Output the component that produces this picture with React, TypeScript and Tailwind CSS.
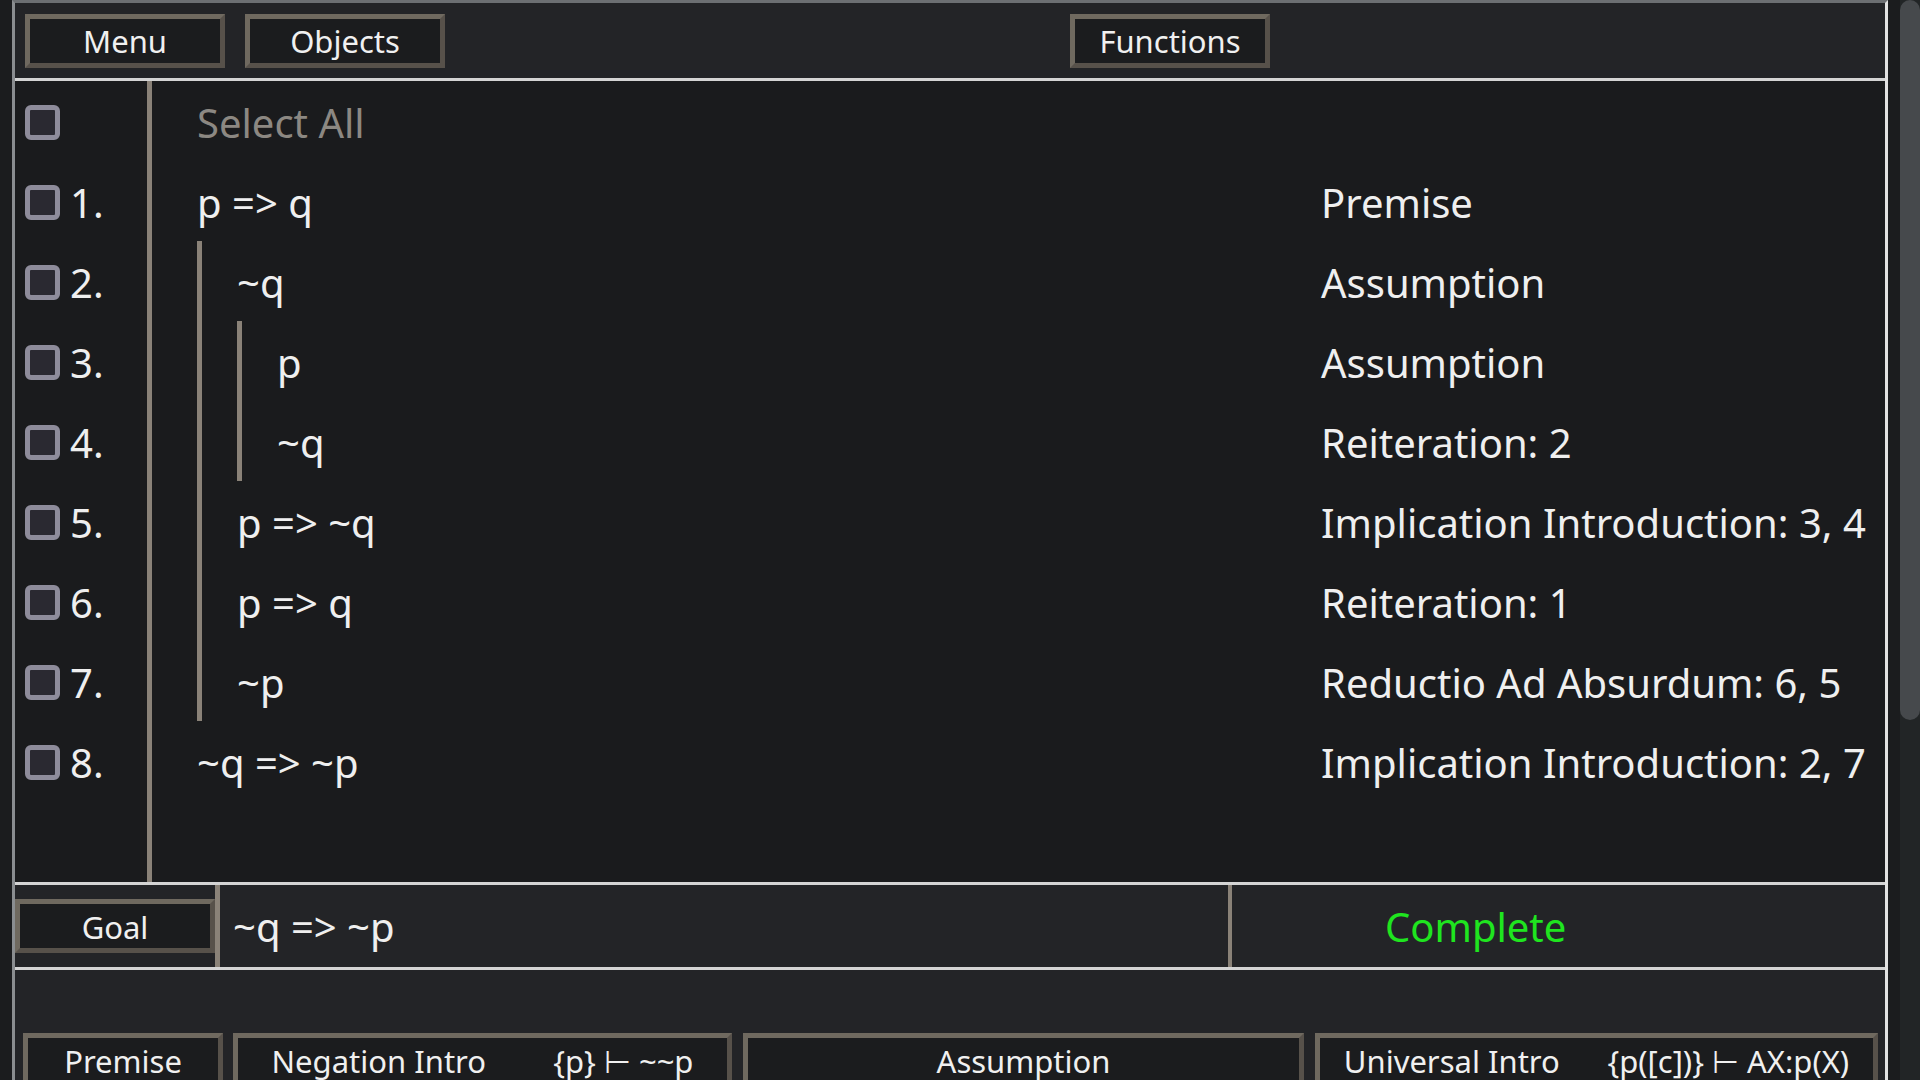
import { useState } from 'react'

type Line = { n: number; formula: string; depth: number; rule: string }

const lines: Line[] = [
  { n: 1, formula: 'p => q', depth: 0, rule: 'Premise' },
  { n: 2, formula: '~q', depth: 1, rule: 'Assumption' },
  { n: 3, formula: 'p', depth: 2, rule: 'Assumption' },
  { n: 4, formula: '~q', depth: 2, rule: 'Reiteration: 2' },
  { n: 5, formula: 'p => ~q', depth: 1, rule: 'Implication Introduction: 3, 4' },
  { n: 6, formula: 'p => q', depth: 1, rule: 'Reiteration: 1' },
  { n: 7, formula: '~p', depth: 1, rule: 'Reductio Ad Absurdum: 6, 5' },
  { n: 8, formula: '~q => ~p', depth: 0, rule: 'Implication Introduction: 2, 7' },
]

// rows of rule buttons under the goal bar: [name, schema]
const ruleRows: [string, string][][] = [
  [['Premise', ''], ['Negation Intro', '{p} ⊢ ~~p'], ['Assumption', ''], ['Universal Intro', '{p([c])} ⊢ AX:p(X)']],
  [['Reiteration', ''], ['Negation Elim', '{~~p} ⊢ p'], ['Implication Intro', ''], ['Universal Elim', '{AX:p(X)} ⊢ p([c])']],
  [['Delete', ''], ['And Intro', '{p, q} ⊢ p && q'], ['Reductio Ad Absurdum', ''], ['Existential Intro', '{p([c])} ⊢ EX:p(X)']],
  [['Undo', ''], ['And Elim', '{p && q} ⊢ p'], ['Implication Elim', ''], ['Existential Elim', '{EX:p(X)} ⊢ p([c])']],
]

const bevel =
  'border-[5px] border-t-[#6f695f] border-l-[#6f695f] border-r-[#57514a] border-b-[#57514a] bg-[#1b1c1e] text-[#f0f0f0] text-[31px] leading-none pt-[2px]'

const widths = ['w-[200px]', 'w-[499px]', 'w-[561px]', 'flex-1']

export default function App() {
  const [checked, setChecked] = useState<number[]>([])

  function toggle(n: number) {
    setChecked(prev => (prev.includes(n) ? prev.filter(x => x !== n) : [...prev, n]))
  }

  return (
    <div className="flex h-screen overflow-hidden bg-[#1b1c1e] [font-family:'Noto_Sans',sans-serif]">
      <div className="min-w-0 flex-1 px-[12px]">
        <div className="flex h-[1620px] flex-col border-[3px] border-t-[#6c6f72] border-l-[#8a8d90] border-r-[#e2e2e2] border-b-[#e2e2e2]">
          {/* Top bar */}
          <div className="flex h-[78px] shrink-0 items-center border-b-[3px] border-[#d4d4d4] bg-[#232427] pl-[10px]">
            <button className={`${bevel} h-[54px] w-[200px]`}>Menu</button>
            <button className={`${bevel} ml-[20px] h-[54px] w-[200px]`}>Objects</button>
            <button className={`${bevel} ml-[625px] h-[54px] w-[200px]`}>Functions</button>
          </div>

          {/* Proof */}
          <div className="flex h-[801px] shrink-0 bg-[#1a1b1d] text-[40px] leading-none text-[#efefef]">
            <div className="w-[137px] shrink-0 border-r-[5px] border-[#8a8278]">
              <div className="flex h-[80px] items-center pl-[10px]">
                <Checkbox
                  on={checked.length === lines.length}
                  onClick={() => setChecked(checked.length === lines.length ? [] : lines.map(l => l.n))}
                />
              </div>
              {lines.map(l => (
                <div key={l.n} className="flex h-[80px] items-center gap-[10px] pl-[10px]">
                  <Checkbox on={checked.includes(l.n)} onClick={() => toggle(l.n)} />
                  <span className="pt-[3px]">{l.n}.</span>
                </div>
              ))}
            </div>

            <div className="flex-1 pl-[45px]">
              <div className="flex h-[80px] items-center pt-[3px] text-[#8c8882]">Select All</div>
              {lines.map(l => (
                <div key={l.n} className="flex h-[80px]">
                  <div className="flex w-[1124px] shrink-0">
                    <Nest depth={l.depth}>{l.formula}</Nest>
                  </div>
                  <div className="flex items-center whitespace-nowrap pt-[3px]">{l.rule}</div>
                </div>
              ))}
            </div>
          </div>

          {/* Goal */}
          <div className="flex h-[88px] shrink-0 items-stretch border-y-[3px] border-[#d4d4d4] bg-[#232427] text-[40px] leading-none">
            <div className="flex items-center">
              <button className={`${bevel} h-[54px] w-[200px]`}>Goal</button>
            </div>
            <div className="w-[5px] bg-[#8a8278]" />
            <div className="flex w-[1008px] items-center pt-[1px] pl-[13px] text-[#efefef]">~q =&gt; ~p</div>
            <div className="w-[4px] bg-[#8a8278]" />
            <div className="flex flex-1 items-center pt-[1px] pl-[153px] text-[#1fe51f]">Complete</div>
          </div>

          {/* Rules */}
          <div className="flex flex-1 flex-col gap-[22px] bg-[#232427] pt-[63px] pr-[7px] pl-[8px]">
            {ruleRows.map((row, i) => (
              <div key={i} className="flex gap-[11px]">
                {row.map(([name, schema], j) => (
                  <button
                    key={name}
                    className={`${bevel} ${widths[j]} flex h-[54px] items-center ${schema ? 'justify-around' : 'justify-center'} ${j === 1 ? 'ml-[-1px]' : ''}`}
                  >
                    <span>{name}</span>
                    {schema && <span>{schema}</span>}
                  </button>
                ))}
              </div>
            ))}
          </div>
        </div>
      </div>

      {/* scrollbar */}
      <div className="w-[20px] shrink-0 bg-[#222526]">
        <div className="h-[720px] rounded-[10px] bg-[#46494c]" />
      </div>
    </div>
  )
}

function Nest({ depth, children }: { depth: number; children: React.ReactNode }) {
  if (depth === 0) return <div className="flex items-center whitespace-nowrap pt-[3px]">{children}</div>
  return (
    <div className="flex border-l-[5px] border-[#8a8278] pl-[35px]">
      <Nest depth={depth - 1}>{children}</Nest>
    </div>
  )
}

function Checkbox({ on, onClick }: { on: boolean; onClick: () => void }) {
  return (
    <button
      onClick={onClick}
      className={`mt-[3px] h-[35px] w-[35px] shrink-0 rounded-[6px] border-[5px] border-[#8e8c9b] ${on ? 'bg-[#8e8c9b]' : 'bg-[#2a2931]'}`}
    />
  )
}
